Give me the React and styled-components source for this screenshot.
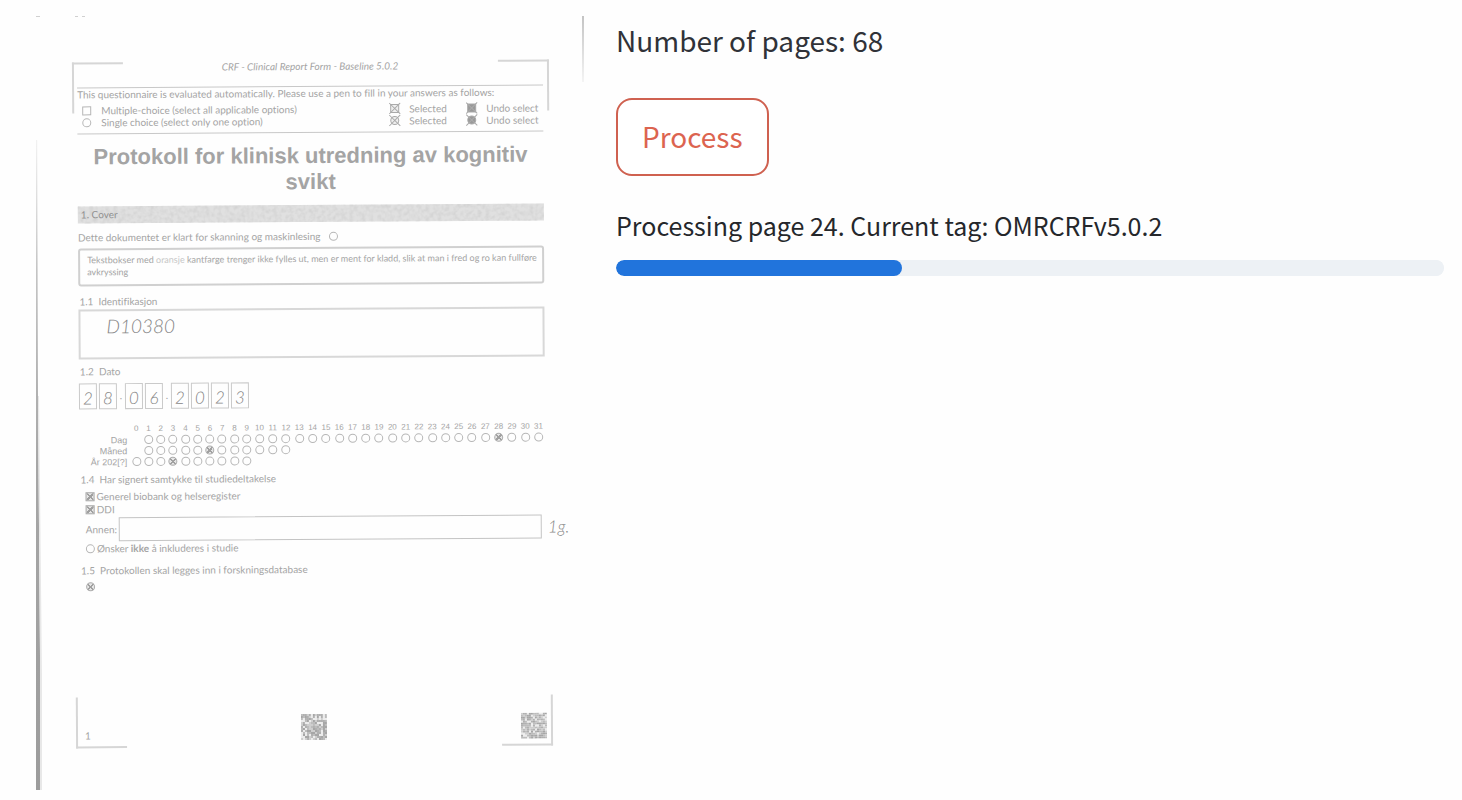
import React from "react";
import styled, { createGlobalStyle, css } from "styled-components";

const GlobalStyle = createGlobalStyle`
  * { box-sizing: border-box; }
  body { margin: 0; background: #fefefe; }
`;

const ink = "#a4a4a4";
const line = "#d0d0d0";
const uiFont = `"Noto Sans CJK SC", "Noto Sans", sans-serif`;
const formFont = `Lato, "Liberation Sans", Arial, sans-serif`;
const titleFont = `"Liberation Sans", Arial, sans-serif`;

/* ---------- page ---------- */

const Page = styled.main`
  display: grid;
  grid-template-columns: minmax(0, 137fr) minmax(0, 207fr);
  column-gap: 32px;
  align-items: start;
  padding: 16px 18px 10px 36px;
`;

const Panel = styled.section`
  display: flex;
  flex-direction: column;
  align-items: flex-start;
  font-family: ${uiFont};
  color: #303238;
`;

const PageCount = styled.p`
  margin: 0;
  font-size: 28px;
  line-height: 48px;
`;

const ProcessButton = styled.button`
  margin-top: 34px;
  padding: 12px 24px 14px;
  border: 2px solid #cf6150;
  border-radius: 16px;
  background: #fff;
  color: #dc6450;
  font-family: inherit;
  font-size: 28px;
  line-height: 48px;
  cursor: pointer;
`;

const ProgressLabel = styled.label`
  margin-top: 29px;
  font-size: 25px;
  line-height: 40px;
  color: #25272b;
`;

const ProgressBar = styled.progress`
  appearance: none;
  display: block;
  width: 100%;
  height: 16px;
  margin-top: 15px;
  border: 0;
  border-radius: 8px;
  overflow: hidden;
  background: #edf1f5;
  &::-webkit-progress-bar { background: #edf1f5; border-radius: 8px; }
  &::-webkit-progress-value { background: #2174dc; border-radius: 8px; }
`;

/* ---------- scanned sheet ---------- */

const Scan = styled.figure`
  position: relative;
  margin: 0;
`;

const ScanEdges = styled.svg`
  position: absolute;
  inset: 0;
  width: 100%;
  height: 100%;
`;

const Sheet = styled.div`
  position: relative;
  display: flex;
  flex-direction: column;
  padding: 44px 39px 50px 43px;
  font-family: ${formFont};
  font-size: 10px;
  font-variant-ligatures: none;
  line-height: 12px;
  color: ${ink};
  transform: rotate(-0.35deg);
`;

const Corner = styled.span`
  position: absolute;
  width: 51px;
  height: 51px;
  border: 0 solid #d6d6d6;
  ${(p) => (p.$top ? "top: 45px; border-top-width: 2px;" : "bottom: 43px; border-bottom-width: 2px;")}
  ${(p) => (p.$left ? "left: 38px; border-left-width: 2px;" : "right: 33px; border-right-width: 2px;")}
`;

const FormHeader = styled.header`
  font-style: italic;
  text-align: center;
`;

const Instructions = styled.div`
  margin-top: 14px;
  padding: 0 0 5px;
  border: solid #c8c8c8;
  border-width: 1px 0;
`;

const Intro = styled.p`
  margin: 0 0 4px;
`;

const LegendRow = styled.div`
  display: grid;
  grid-template-columns: 306px 77px 1fr;
  align-items: center;
  padding-left: 5px;
`;

const Choice = styled.label`
  display: flex;
  align-items: center;
  gap: ${(p) => p.$gap || 2}px;
  padding-left: ${(p) => p.$indent || 0}px;
  margin-top: ${(p) => p.$top || 0}px;
`;

const Legend = styled.span`
  display: flex;
  align-items: center;
  gap: 8px;
  white-space: nowrap;
`;

const markStyle = css`
  appearance: none;
  display: block;
  flex: none;
  width: 9px;
  height: 9px;
  margin: 0;
  border: 1px solid #b6b6b6;
  background: transparent;
  &:checked {
    border-color: #acacac;
    background:
      linear-gradient(45deg, transparent 42%, #a0a0a0 42% 58%, transparent 58%),
      linear-gradient(-45deg, transparent 42%, #a0a0a0 42% 58%, transparent 58%),
      #e6e6e6;
  }
`;

const Radio = styled.input.attrs({ type: "radio", readOnly: true })`
  ${markStyle}
  border-radius: 50%;
`;

const Check = styled.input.attrs({ type: "checkbox", readOnly: true })`
  ${markStyle}
`;

const Title = styled.h1`
  margin: 10px 0 0;
  font-family: ${titleFont};
  font-size: 22px;
  font-weight: 700;
  line-height: 26px;
  text-align: center;
  color: #a4a4a4;
`;

const SectionBar = styled.h2`
  position: relative;
  margin: 10px 0 0;
  padding: 0 3px 1px;
  font-size: 10px;
  font-weight: 400;
  line-height: 16px;
  color: #909090;
  background: #e0e0e0;
`;

const Grain = styled.svg`
  position: absolute;
  inset: 0;
  width: 100%;
  height: 100%;
`;

const BarText = styled.span`
  position: relative;
`;

const ReadyRow = styled.label`
  display: flex;
  align-items: center;
  gap: 8px;
  margin-top: 8px;
`;

const NoteBox = styled.div`
  margin-top: 5px;
  padding: 4px 0 6px 7px;
  border: 2px solid ${line};
  border-radius: 3px;
  font-size: 9px;
`;

const NoteLine = styled.div`
  white-space: nowrap;
`;

const Faint = styled.span`
  color: #c6c6c6;
`;

const Question = styled.h3`
  margin: ${(p) => p.$top}px 0 0;
  padding-left: 1px;
  font-size: 10px;
  font-weight: 400;
`;

const handwriting = css`
  font-family: Lato, "Open Sans", sans-serif;
  font-weight: 300;
  font-style: italic;
  color: #868686;
`;

const IdField = styled.input`
  ${handwriting}
  width: 100%;
  height: 50px;
  margin-top: 2px;
  padding: 0 26px 18px;
  border: 2px solid #d8d8d8;
  background: transparent;
  font-size: 19px;
`;

const DateRow = styled.div`
  display: flex;
  margin-top: 6px;
`;

const DateGroup = styled.div`
  display: flex;
  gap: 2px;
`;

const DateDot = styled.span`
  width: 8px;
  text-align: center;
  line-height: 24px;
`;

const DigitField = styled.input`
  ${handwriting}
  width: 18px;
  height: 26px;
  padding: 2px 0 0;
  border: 1px solid #cacaca;
  background: transparent;
  font-size: 17px;
  text-align: center;
`;

const Bubbles = styled.div`
  display: flex;
  flex-direction: column;
  margin-top: 15px;
`;

const BubbleRow = styled.div`
  display: grid;
  grid-template-columns: 51px repeat(10, 12fr) repeat(22, 13fr);
  justify-items: center;
  align-items: center;
  height: ${(p) => (p.$head ? 10 : 11)}px;
  font-family: ${titleFont};
  font-size: ${(p) => (p.$head ? 8 : 9)}px;
  line-height: 10px;
`;

const BubbleLabel = styled.span`
  justify-self: end;
  padding-right: 3px;
  white-space: nowrap;
`;

const OtherRow = styled.div`
  position: relative;
  display: flex;
  align-items: center;
  gap: 2px;
  margin-top: 2px;
  padding: 0 4px 0 6px;
`;

const OtherField = styled.input`
  flex: 1;
  min-width: 0;
  height: 24px;
  border: 1px solid #c4c4c4;
  background: transparent;
`;

const MarginNote = styled.span`
  ${handwriting}
  position: absolute;
  left: 100%;
  top: 2px;
  padding-left: 2px;
  font-size: 17px;
  line-height: 20px;
`;

const SheetFooter = styled.footer`
  display: grid;
  grid-template-columns: 1fr auto 1fr;
  align-items: end;
  margin-top: 124px;
`;

const PageNumber = styled.span`
  padding-left: 4px;
`;

const CodeMark = styled.svg`
  display: block;
  width: 26px;
  height: 26px;
  justify-self: end;
`;

/* ---------- drawings ---------- */

function MatrixCode({ seed }) {
  const size = 13;
  const cells = [];
  let s = seed;
  for (let y = 0; y < size; y += 1) {
    for (let x = 0; x < size; x += 1) {
      s = (s * 16807) % 2147483647;
      const shade = ["#a6a6a6", "#b0b0b0", "#bcbcbc", "#cecece", "#ececec"][(s >> 8) % 5];
      cells.push(<rect key={`${x}-${y}`} x={x} y={y} width="1" height="1" fill={shade} />);
    }
  }
  return (
    <CodeMark viewBox={`0 0 ${size} ${size}`} aria-hidden="true">
      {cells}
    </CodeMark>
  );
}

function CrossMark({ filled, round }) {
  return (
    <svg width="13" height="12" viewBox="0 0 13 12" stroke="#aaa" fill="none" aria-hidden="true">
      {round ? (
        <circle cx="6.5" cy="6" r="4" fill={filled ? "#999" : "#efefef"} />
      ) : (
        <rect x="2.5" y="2" width="8" height="8" fill={filled ? "#999" : "#efefef"} />
      )}
      <path d="M1 .5 12 11.5M12 .5 1 11.5" />
    </svg>
  );
}

const numbers = Array.from({ length: 32 }, (_, i) => i);
const bubbleRows = [
  { label: "Dag", from: 1, to: 31, marked: 28 },
  { label: "Måned", from: 1, to: 12, marked: 6 },
  { label: "År 202[?]", from: 0, to: 9, marked: 3 },
];
const dateGroups = [["2", "8"], ["0", "6"], ["2", "0", "2", "3"]];

function ScannedForm() {
  return (
    <Scan>
      <ScanEdges viewBox="0 0 548 774" preserveAspectRatio="none" aria-hidden="true">
        <defs>
          <linearGradient id="edge" x1="0" y1="0" x2="0" y2="1">
            <stop offset="0" stopColor="#f2f2f2" />
            <stop offset="0.2" stopColor="#c4c4c4" />
            <stop offset="0.5" stopColor="#a6a6a6" />
            <stop offset="1" stopColor="#9c9c9c" />
          </linearGradient>
          <linearGradient id="fade" x1="0" y1="0" x2="0" y2="1">
            <stop offset="0" stopColor="#c4c4c4" />
            <stop offset="1" stopColor="#f4f4f4" />
          </linearGradient>
        </defs>
        <path d="M0 124H1.2L2 380 4 640V774H0Z" fill="url(#edge)" />
        <path d="M2 380 3 380 6 660V774H4V640Z" fill="#e8e8e8" />
        <rect x="546" y="0" width="2" height="66" fill="url(#fade)" />
        <path d="M0 .5H4M39 .5h3M46 .5h3" stroke="#d0d0d0" />
      </ScanEdges>
      <Sheet>
        <Corner $top $left />
        <Corner $top />
        <Corner $left />
        <Corner />
        <FormHeader>CRF - Clinical Report Form - Baseline 5.0.2</FormHeader>
        <Instructions>
          <Intro>
            This questionnaire is evaluated automatically. Please use a pen to fill in your answers as follows:
          </Intro>
          <LegendRow>
            <Choice $gap={10}>
              <Check />
              Multiple-choice (select all applicable options)
            </Choice>
            <Legend><CrossMark />Selected</Legend>
            <Legend><CrossMark filled />Undo select</Legend>
          </LegendRow>
          <LegendRow>
            <Choice $gap={10}>
              <Radio name="sample" />
              Single choice (select only one option)
            </Choice>
            <Legend><CrossMark round />Selected</Legend>
            <Legend><CrossMark round filled />Undo select</Legend>
          </LegendRow>
        </Instructions>
        <Title>Protokoll for klinisk utredning av kognitiv svikt</Title>
        <SectionBar>
          <Grain aria-hidden="true">
            <filter id="grain">
              <feTurbulence type="fractalNoise" baseFrequency="0.25" numOctaves="2" seed="4" />
              <feColorMatrix values="0 0 0 0 0.66  0 0 0 0 0.66  0 0 0 0 0.66  2.4 0 0 0 -0.9" />
            </filter>
            <rect width="100%" height="100%" filter="url(#grain)" />
          </Grain>
          <BarText>1. Cover</BarText>
        </SectionBar>
        <ReadyRow>
          Dette dokumentet er klart for skanning og maskinlesing
          <Radio name="ready" />
        </ReadyRow>
        <NoteBox>
          <NoteLine>
            Tekstbokser med <Faint>oransje</Faint> kantfarge trenger ikke fylles ut, men er ment for kladd, slik at
            man i fred og ro kan fullføre
          </NoteLine>
          <NoteLine>avkryssing</NoteLine>
        </NoteBox>
        <Question $top={9} as="label" htmlFor="ident">1.1&nbsp; Identifikasjon</Question>
        <IdField id="ident" defaultValue="D10380" />
        <Question $top={6}>1.2&nbsp; Dato</Question>
        <DateRow>
          {dateGroups.map((group, g) => (
            <React.Fragment key={g}>
              {g > 0 && <DateDot>.</DateDot>}
              <DateGroup>
                {group.map((digit, i) => (
                  <DigitField key={i} defaultValue={digit} aria-label="Dato" />
                ))}
              </DateGroup>
            </React.Fragment>
          ))}
        </DateRow>
        <Bubbles>
          <BubbleRow $head>
            <span />
            {numbers.map((n) => <span key={n}>{n}</span>)}
          </BubbleRow>
          {bubbleRows.map((row) => (
            <BubbleRow key={row.label}>
              <BubbleLabel>{row.label}</BubbleLabel>
              {numbers.map((n) =>
                n >= row.from && n <= row.to ? (
                  <Radio
                    key={n}
                    name={row.label}
                    aria-label={`${row.label} ${n}`}
                    defaultChecked={n === row.marked}
                  />
                ) : (
                  <span key={n} />
                )
              )}
            </BubbleRow>
          ))}
        </Bubbles>
        <Question $top={6}>1.4&nbsp; Har signert samtykke til studiedeltakelse</Question>
        <Choice $indent={6} $top={5}><Check defaultChecked />Generel biobank og helseregister</Choice>
        <Choice $indent={6} $top={1}><Check defaultChecked />DDI</Choice>
        <OtherRow>
          <label htmlFor="other">Annen:</label>
          <OtherField id="other" />
          <MarginNote>1g.</MarginNote>
        </OtherRow>
        <Choice $indent={6} $top={1}>
          <Radio name="exclude" />
          <span>Ønsker <b>ikke</b> å inkluderes i studie</span>
        </Choice>
        <Question $top={10}>1.5&nbsp; Protokollen skal legges inn i forskningsdatabase</Question>
        <Choice $indent={6} $top={6}><Radio name="database" defaultChecked aria-label="1.5" /></Choice>
        <SheetFooter>
          <PageNumber>1</PageNumber>
          <MatrixCode seed={7193} />
          <MatrixCode seed={230977} />
        </SheetFooter>
      </Sheet>
    </Scan>
  );
}

export default function App() {
  return (
    <>
      <GlobalStyle />
      <Page>
        <ScannedForm />
        <Panel>
          <PageCount>Number of pages: 68</PageCount>
          <ProcessButton type="button">Process</ProcessButton>
          <ProgressLabel htmlFor="progress">Processing page 24. Current tag: OMRCRFv5.0.2</ProgressLabel>
          <ProgressBar id="progress" value={346} max={1000} />
        </Panel>
      </Page>
    </>
  );
}
